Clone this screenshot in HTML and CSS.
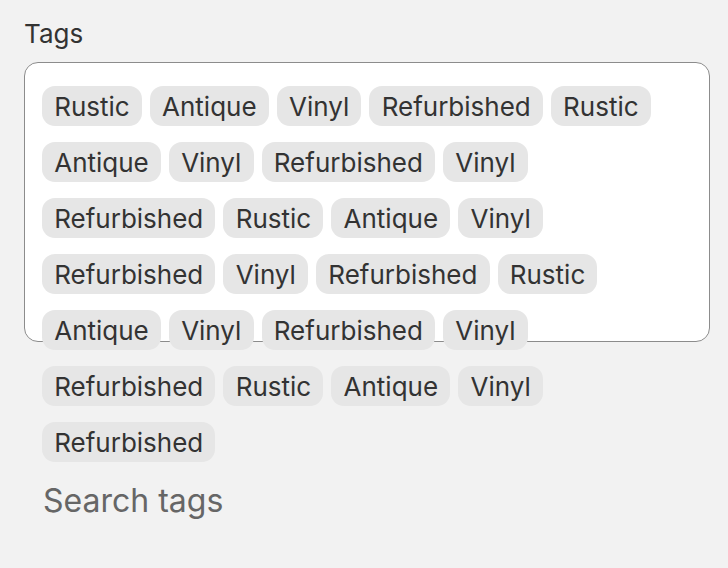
FILE: index.html
```html
<!DOCTYPE html>
<html>
<head>
<meta charset="utf-8">
<link rel="stylesheet" href="styles.css">
</head>
<body>
<div class="field">
  <label class="label">Tags</label>
  <div class="box">
    <div class="tags">
      <span class="chip">Rustic</span><span class="chip">Antique</span><span class="chip">Vinyl</span><span class="chip">Refurbished</span><span class="chip">Rustic</span>
      <span class="chip">Antique</span><span class="chip">Vinyl</span><span class="chip">Refurbished</span><span class="chip">Vinyl</span>
      <span class="chip">Refurbished</span><span class="chip">Rustic</span><span class="chip">Antique</span><span class="chip">Vinyl</span>
      <span class="chip">Refurbished</span><span class="chip">Vinyl</span><span class="chip">Refurbished</span><span class="chip">Rustic</span>
      <span class="chip">Antique</span><span class="chip">Vinyl</span><span class="chip">Refurbished</span><span class="chip">Vinyl</span>
      <span class="chip">Refurbished</span><span class="chip">Rustic</span><span class="chip">Antique</span><span class="chip">Vinyl</span>
      <span class="chip">Refurbished</span>
      <input class="search" type="text" placeholder="Search tags">
    </div>
  </div>
</div>
</body>
</html>
```
FILE: styles.css
```css
html, body {
  margin: 0;
  padding: 0;
  background: #f2f2f2;
  font-family: Inter, "Noto Sans", sans-serif;
}
body {
  min-height: 568px;
}
.field {
  padding: 19px 18px 0 24px;
  min-height: 549px;
}
.label {
  display: block;
  font-size: 26px;
  line-height: 30px;
  color: #333333;
  margin: 0 0 13px 0;
}
.box {
  box-sizing: border-box;
  width: 686px;
  height: 280px;
  border: 1px solid #8c8c8c;
  border-radius: 14px;
  background: #ffffff;
  padding: 23px 17px 0 17px;
  overflow: visible;
}
.tags {
  display: flex;
  flex-wrap: wrap;
  align-content: flex-start;
  gap: 16px 8px;
  overflow: visible;
}
.chip {
  display: inline-flex;
  align-items: center;
  flex: 0 0 auto;
  height: 40px;
  padding: 0 12.2px;
  border-radius: 13px;
  background: #e6e6e6;
  color: #333333;
  font-size: 26px;
  box-sizing: border-box;
}
.search {
  flex: 0 0 100%;
  height: 44px;
  border: none;
  background: transparent;
  font-family: Inter, "Noto Sans", sans-serif;
  font-size: 32px;
  color: #333333;
  padding: 0 0 0 1px;
  margin: 0;
  outline: none;
}
.search::placeholder {
  color: #666666;
}
```
